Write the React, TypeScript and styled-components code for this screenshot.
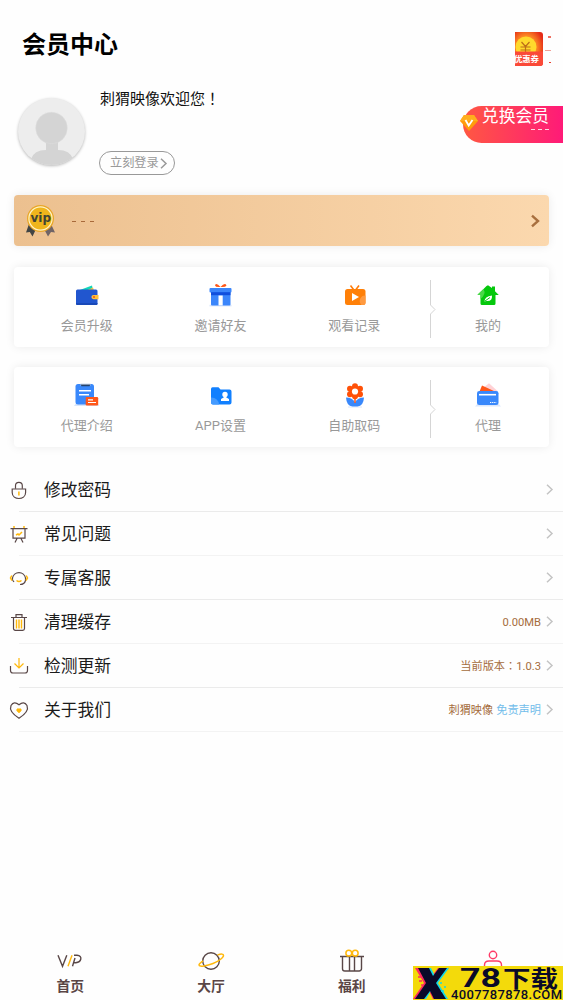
import React from 'react';
import styled, { createGlobalStyle } from 'styled-components';

const Global = createGlobalStyle`
  * { box-sizing: border-box; }
  body { margin: 0; background: #fefefe; overflow: hidden; font-family: Roboto, "Noto Sans CJK SC", sans-serif; }
  svg { display: block; flex: none; overflow: visible; }
`;

const Page = styled.div`
  position: relative;
  display: flex;
  flex-direction: column;
  width: 563px;
  height: 1000px;
  overflow: hidden;
  background: #fefefe;
`;

const Header = styled.header`
  display: flex;
  justify-content: space-between;
  height: 90px;
  padding: 26px 12px 0 22px;
`;

const Title = styled.h1`
  margin: 0;
  font-size: 24px;
  line-height: 38px;
  font-weight: 700;
  color: #000;
`;

const Coupon = styled.div`
  display: flex;
  gap: 2px;
  height: 34px;
  margin-top: 6px;
`;

const CouponBadge = styled.div`
  position: relative;
  width: 28px;
  height: 34px;
  border-radius: 0 3px 3px 0;
  overflow: hidden;
`;

const CouponText = styled.span`
  position: absolute;
  right: 4px;
  bottom: 2px;
  font-size: 8.4px;
  line-height: 10px;
  font-weight: 700;
  color: #fff;
  white-space: nowrap;
`;

const Profile = styled.section`
  display: flex;
  height: 105px;
`;

const Avatar = styled.div`
  width: 67px;
  height: 67px;
  margin: 8px 14px 0 18px;
  border-radius: 50%;
  overflow: hidden;
  background: #ededed;
  box-shadow: 0 1px 3px rgba(0, 0, 0, 0.28);
`;

const Welcome = styled.div`
  flex: 1;
  display: flex;
  flex-direction: column;
  align-items: flex-start;
`;

const WelcomeText = styled.div`
  height: 20px;
  margin-left: 1px;
  font-size: 15px;
  line-height: 16px;
  color: #111;
`;

const Centered = styled.span`
  font-family: "Noto Sans CJK TC", sans-serif;
  line-height: 1;
`;

const LoginButton = styled.button`
  display: flex;
  align-items: center;
  gap: 1px;
  width: 76px;
  height: 24px;
  margin: 41px 0 0;
  padding: 0 0 0 10px;
  border: 1px solid #999;
  border-radius: 12px;
  background: transparent;
  font: 12.2px/22px Roboto, "Noto Sans CJK SC", sans-serif;
  color: #999;
`;

const Ribbon = styled.div`
  position: relative;
  width: 100px;
  height: 37px;
  margin-top: 16px;
  padding: 1px 14px 0 0;
  border-radius: 19px 0 0 19px;
  background: linear-gradient(90deg, #ff5842, #ff1a78);
  color: #fff;
  text-align: right;
`;

const RibbonTitle = styled.div`
  font-size: 16.8px;
  line-height: 18px;
`;

const Dashes = styled.div<{ $color: string; $gap: number; $width: number }>`
  display: flex;
  gap: ${(p) => p.$gap}px;
  i { width: ${(p) => p.$width}px; height: 1px; background: ${(p) => p.$color}; }
`;

const RibbonDashes = styled(Dashes)`
  justify-content: flex-end;
  margin-top: 4px;
`;

const Gem = styled.svg`
  position: absolute;
  left: -3px;
  top: 8px;
`;

const VipBar = styled.section`
  display: flex;
  align-items: center;
  height: 51px;
  margin: 0 14px 21px;
  padding: 0 10px 0 11px;
  border-radius: 4px;
  background: linear-gradient(90deg, #ecc08f, #fbd8ae);
  box-shadow: 0 0 10px rgba(0, 0, 0, 0.08);
`;

const VipDashes = styled(Dashes)`
  flex: 1;
  margin: 1px 0 0 17px;
`;

const Card = styled.section`
  display: grid;
  grid-template-columns: repeat(4, 133.7px);
  height: 80px;
  margin: 0 14px 20px;
  padding-left: 6px;
  border-radius: 4px;
  background: #fff;
  box-shadow: 0 0 10px rgba(0, 0, 0, 0.08);
`;

const Cell = styled.div`
  position: relative;
  display: flex;
  flex-direction: column;
  align-items: center;
  padding-top: 16px;
`;

const CellLabel = styled.span`
  margin-top: 9px;
  font-size: 13px;
  line-height: 20px;
  color: #999;
`;

const Divider = styled.svg`
  position: absolute;
  left: 9px;
  top: 13px;
`;

const List = styled.ul`
  margin: 1px 0 0;
  padding: 0;
  list-style: none;
`;

const Row = styled.li<{ $line: string }>`
  display: flex;
  align-items: center;
  height: 44px;
  padding: 0 10px 0 9px;
  background: linear-gradient(${(p) => p.$line}, ${(p) => p.$line}) 19px 100% / 100% 1px no-repeat;
`;

const RowLabel = styled.span`
  flex: 1;
  margin: -1px 0 0 15px;
  font-size: 16.8px;
  line-height: 24px;
  color: #1b1b1b;
`;

const RowValue = styled.span<{ $blue?: boolean }>`
  margin: 1px 0 0 3px;
  font-size: 11.2px;
  line-height: 16px;
  color: ${(p) => (p.$blue ? '#72bdeb' : '#a56c3c')};
`;

const RowArrow = styled.div`
  margin: -2px 0 0 5px;
`;

const TabBar = styled.nav`
  display: grid;
  grid-template-columns: repeat(4, 1fr);
  height: 60px;
  margin-top: auto;
`;

const Tab = styled.div`
  display: flex;
  flex-direction: column;
  align-items: center;
  padding-top: 8px;
`;

const TabLabel = styled.span`
  margin-top: 4px;
  font-size: 13.8px;
  line-height: 20px;
  font-weight: 700;
  color: #5a4545;
`;

const Watermark = styled.div`
  position: absolute;
  left: 413px;
  top: 966px;
  display: flex;
  width: 150px;
  height: 34px;
  background: #f3da0b;
`;

const WatermarkText = styled.svg`
  text { fill: #0a0a28; }
`;

const Arrow = ({ color = '#c4c4c4', w = 7, h = 11, stroke = 1.5 }: { color?: string; w?: number; h?: number; stroke?: number }) => (
  <svg width={w} height={h} viewBox={`0 0 ${w} ${h}`} fill="none" stroke={color} strokeWidth={stroke}>
    <path d={`M1 .7L${w - 1} ${h / 2}L1 ${h - 0.7}`} />
  </svg>
);

const Medal = () => (
  <svg width="30" height="34" viewBox="0 0 30 34">
    <path d="M4 20L1 28.500L4.800 28L7.500 32.500L11 25z" fill="#414444" />
    <path d="M26 20L30 28.500L26 28L23 32.500L19 25z" fill="#706466" />
    <circle cx="15.500" cy="14.500" r="13.500" fill="#e9a629" />
    <circle cx="15.500" cy="14.500" r="11.600" fill="#efb51c" stroke="#fff3c4" strokeWidth="1.200" />
    <text x="15.800" y="18" textAnchor="middle" fontFamily="DejaVu Sans, sans-serif" fontSize="12" fontWeight="700" fill="#414434">vip</text>
  </svg>
);

const cardIcons: Record<string, React.ReactNode> = {
  wallet: (
    <>
      <path d="M4.500 7.500L18 2.500L19 7.500z" fill="#12d6ba" />
      <path d="M12.500 7.500L19 4.500L20 7.500z" fill="#ffc23b" />
      <rect x="2" y="6.500" width="21.500" height="15.500" rx="1.500" fill="#2156cf" />
      <path d="M2 20h21.500v.7a1.300 1.300 0 0 1-1.300 1.300H3.300A1.300 1.300 0 0 1 2 20.700z" fill="#1949b8" />
      <path d="M19.500 12h5v4.200h-5a2.100 2.100 0 0 1 0-4.200z" fill="#ffc23b" />
      <circle cx="20" cy="14" r="1.100" fill="#ef5a24" />
    </>
  ),
  gift: (
    <>
      <path d="M12.500 4Q8-1 7 2.500Q7.500 4.500 12.500 4Q17.500 4.500 18.500 2.500Q17-1 12.500 4z" fill="#ff5718" />
      <path d="M1.500 22.600h22" stroke="#d8e5fb" strokeWidth="1.600" />
      <rect x="3" y="8" width="19.500" height="14.500" rx="1" fill="#3b86fb" />
      <rect x="1.500" y="5" width="22" height="4.500" rx="1" fill="#3b86fb" />
      <rect x="3" y="9.200" width="19.500" height="3" fill="#104fdd" />
      <rect x="10.500" y="12.500" width="4.200" height="10" fill="#fff" />
    </>
  ),
  tv: (
    <>
      <path d="M8.500 2.500L11.500 6.500M17 2.500L14 6.500" stroke="#ff7d0c" strokeWidth="1.600" />
      <rect x="3" y="6" width="20.500" height="16" rx="2.500" fill="#ff8008" />
      <path d="M23.500 12.500a5.500 5.500 0 0 0-4 9.500h2a2 2 0 0 0 2-2z" fill="#ff9a40" />
      <path d="M10 10L17 14L10 18z" fill="#fff" />
    </>
  ),
  home: (
    <>
      <path d="M13 2.300L17 5V3.500h3v4.700L23.800 12H20.500v8.500a1.500 1.500 0 0 1-1.500 1.500H7A1.500 1.500 0 0 1 5.500 20.500V12H2.500L11.500 3z" fill="#05c80d" />
      <path d="M8.500 6L2.500 11.500L3 12H5.500v4Q11.500 11 8.500 6z" fill="#49d849" />
      <path d="M9.500 18.500Q9.500 13.500 17 12.500Q17.500 18.500 11.500 18z" fill="#fff" />
      <path d="M10 18L15 14.500" stroke="#05c80d" />
    </>
  ),
  notes: (
    <>
      <path d="M0 23L2.500 19.500h20l3 3.500z" fill="#d7e5fb" />
      <rect x="1.500" y="1" width="18.500" height="20.500" rx="2.500" fill="#3988fb" />
      <path d="M6.500 0h10v2.500H6.500z" fill="#e5edf9" />
      <path d="M6.500 1.500l1 1.700h8l1-1.700" fill="#24426c" />
      <path d="M5 7.700h12M5 11.700h10" stroke="#fff" strokeWidth="1.600" />
      <rect x="11.700" y="14" width="12.500" height="8.500" rx="1.200" fill="#ff5718" />
      <path d="M14 16.800h5M14 19.500h8" stroke="#fff" strokeWidth="1.200" />
    </>
  ),
  folder: (
    <>
      <path d="M3 6Q3 4.300 4.500 4.300h6L12.500 6.500H21.500a2 2 0 0 1 2 2V19.500a2 2 0 0 1-2 2H5a2 2 0 0 1-2-2z" fill="#1180ff" />
      <path d="M3 14.500a7.500 7.500 0 0 1 8 7H5a2 2 0 0 1-2-2z" fill="#459bff" />
      <circle cx="17" cy="11.500" r="2.700" fill="#fff" />
      <path d="M15.700 12h2.600v2.500l2.700 1.600v2h-8v-2l2.700-1.600z" fill="#fff" />
    </>
  ),
  flower: (
    <>
      <path d="M6 24h14" stroke="#d8e5fb" />
      <path d="M4 14.500Q10.500 14.500 13 19.500Q15.500 14.500 22 14.500Q21.500 23 15.500 23.500H10.500Q4.500 23 4 14.500z" fill="#3988fb" />
      <path d="M13 15v5" stroke="#ff5718" strokeWidth="1.500" />
      <g fill="#ff5108">
        <circle cx="13" cy="3.300" r="3" /><circle cx="8" cy="5.800" r="3" /><circle cx="18" cy="5.800" r="3" />
        <circle cx="8" cy="11.200" r="3" /><circle cx="18" cy="11.200" r="3" /><circle cx="13" cy="13.200" r="3" />
        <circle cx="13" cy="8.500" r="5.500" />
      </g>
      <circle cx="13" cy="8.500" r="3.100" fill="#fff" />
    </>
  ),
  cards: (
    <>
      <path d="M0 23.500L3 20h20l3 3.500z" fill="#dbe7fc" />
      <path d="M8 5L14 .3L22.500 8H10z" fill="#ffd2d6" />
      <path d="M4.500 8.500L7 2.500L20 8.500z" fill="#ff5718" />
      <rect x="2" y="8" width="21.500" height="14" rx="2.300" fill="#3988fb" />
      <path d="M4 11.700h17" stroke="#fff" strokeWidth="1.600" />
      <path d="M15 19.500h6.500" stroke="#fff" strokeDasharray="1.300 .8" />
    </>
  ),
};

const rowIcons: Record<string, React.ReactNode> = {
  lock: (
    <>
      <path d="M6.500 8.700V5.700a3.400 3.400 0 0 1 6.800 0V8.700" />
      <path d="M3.200 9h13.400V12.500c0 8-13.400 8-13.400 0z" />
      <path d="M9.900 11.500v4" stroke="#ffb80b" strokeWidth="1.500" />
    </>
  ),
  board: (
    <>
      <path d="M1.500 4.700h17M4 5v9.200h12V5M8 14.500L6 18.500M12 14.500L14 18.500" />
      <path d="M5 2v2M15 2v2M7 11l2-1 1 1 3-3" stroke="#ffb80b" strokeWidth="1.500" />
    </>
  ),
  service: (
    <>
      <path d="M3.500 12V10a6.600 6.600 0 0 1 13 0v2.500q-1 4-5.500 4M3.500 12l1.500 2" />
      <path d="M2.800 7.500L1.500 10L3 12.500M17.200 7.500l1.300 2.500L17 12.500M7.500 12.500q2.500 2 5 0" stroke="#ffb80b" strokeWidth="1.500" />
    </>
  ),
  trash: (
    <>
      <path d="M2 5.500h16M7 5V2.700h6V5M4.500 6v10.500a1.800 1.800 0 0 0 1.800 1.800h7.400a1.800 1.800 0 0 0 1.800-1.800V6" />
      <path d="M7.500 7.500v9M10 7.500v9M12.500 7.500v9" stroke="#ffb80b" strokeWidth="1.400" />
    </>
  ),
  download: (
    <>
      <path d="M1.500 10v4.500a2.500 2.500 0 0 0 2.500 2.500h12a2.500 2.500 0 0 0 2.500-2.500V10" />
      <path d="M10 2v10M5.500 7.500L10 12L14.500 7.500" stroke="#ffb80b" />
    </>
  ),
  heart: (
    <>
      <path d="M10 18.200Q-.5 11.500 2 5.500Q5 .5 10 4.800Q15 .5 18 5.500Q20.500 11.500 10 18.200z" />
      <path d="M10 13Q6.500 10.500 8 9Q9 8 10 9Q11 8 12 9Q13.500 10.500 10 13z" fill="#ffb80b" stroke="#ffb80b" strokeWidth=".5" />
    </>
  ),
};

const tabIcons: Record<string, React.ReactNode> = {
  vip: (
    <>
      <path d="M2 7.300L6.500 18.300L10.800 7.300M16.500 18.300L19 10M18 7.300h3q4.500.5 3.800 3.700t-5 3.700h-2" />
      <path d="M16 7.300L12 18.300" stroke="#ffb80b" />
    </>
  ),
  planet: (
    <>
      <circle cx="14" cy="13" r="8.300" />
      <path d="M20.500 7q6-2 6 .5c0 2-5 6-10.500 8S2.300 19.500 2 17q0-1.500 4-4.200" stroke="#ffb80b" strokeWidth="1.500" />
    </>
  ),
  gift: (
    <>
      <path d="M2 8.500h24M4.500 9v11.700a2.300 2.300 0 0 0 2.300 2.300h14.400a2.300 2.300 0 0 0 2.300-2.300V9M11.500 9v14M16.500 9v14" />
      <circle cx="10.800" cy="5.200" r="2.900" stroke="#ffb80b" strokeWidth="1.500" />
      <circle cx="17.200" cy="5.200" r="2.900" stroke="#ffb80b" strokeWidth="1.500" />
    </>
  ),
  user: (
    <g stroke="#ff3b68">
      <circle cx="14" cy="7" r="3.700" />
      <path d="M5.500 19v-2q0-4 4.500-4h8q4.500 0 4.500 4v2" />
    </g>
  ),
};

const menus = [
  [['wallet', '会员升级'], ['gift', '邀请好友'], ['tv', '观看记录'], ['home', '我的']],
  [['notes', '代理介绍'], ['folder', 'APP设置'], ['flower', '自助取码'], ['cards', '代理']],
];

const rows: { icon: string; label: string; value?: React.ReactNode; link?: string }[] = [
  { icon: 'lock', label: '修改密码' },
  { icon: 'board', label: '常见问题' },
  { icon: 'service', label: '专属客服' },
  { icon: 'trash', label: '清理缓存', value: '0.00MB' },
  { icon: 'download', label: '检测更新', value: <>当前版本<Centered>：</Centered>1.0.3</> },
  { icon: 'heart', label: '关于我们', value: '刺猬映像', link: '免责声明' },
];

const tabs = [['vip', '首页'], ['planet', '大厅'], ['gift', '福利'], ['user', '']];

export default function App() {
  return (
    <Page>
      <Global />
      <Header>
        <Title>会员中心</Title>
        <Coupon>
          <CouponBadge>
            <svg width="28" height="34" viewBox="0 0 28 34">
              <defs>
                <radialGradient id="glow" cx=".4" cy=".48" r=".65">
                  <stop offset=".5" stopColor="#ff9625" />
                  <stop offset="1" stopColor="#e52b17" />
                </radialGradient>
              </defs>
              <rect width="28" height="34" fill="url(#glow)" />
              <circle cx="11" cy="15" r="10.500" fill="#ffd92c" />
              <path d="M6.500 10L10.500 14.500L14.500 10M5.500 15h10M5.500 18h10M10.500 14.500V20" fill="none" stroke="#bd6e18" strokeWidth="1.200" />
              <path d="M0 19.500h28V34H0z" fill="#fa4938" />
            </svg>
            <CouponText>优惠券</CouponText>
          </CouponBadge>
          <svg width="6" height="34" viewBox="0 0 6 34">
            <path d="M3 5h3" stroke="#e8402e" strokeWidth="1.500" />
            <path d="M0 18.500h6" stroke="#f1a097" />
            <path d="M4 30.500h2" stroke="#e8402e" />
          </svg>
        </Coupon>
      </Header>

      <Profile>
        <Avatar>
          <svg width="67" height="67" viewBox="0 0 67 67">
            <path d="M28 43h12v9q12 0 15 9v6H13v-6q3-9 15-9z" fill="#d4d4d4" />
            <circle cx="33.500" cy="30" r="15.800" fill="#d4d4d4" stroke="#dedede" strokeWidth=".5" />
          </svg>
        </Avatar>
        <Welcome>
          <WelcomeText>刺猬映像欢迎您<Centered>！</Centered></WelcomeText>
          <LoginButton>立刻登录<Arrow color="#999" /></LoginButton>
        </Welcome>
        <Ribbon>
          <Gem width="18" height="18" viewBox="0 0 18 18">
            <path d="M4 1h10l4 6-9 10L0 7z" fill="#ff9d0b" />
            <path d="M4 1h10l4 6H0z" fill="#ffae1e" />
            <path d="M5.500 6L8.700 11.500L12.500 6" fill="none" stroke="#fff" strokeWidth="1.800" />
          </Gem>
          <RibbonTitle>兑换会员</RibbonTitle>
          <RibbonDashes $color="#ffd5e0" $gap={3} $width={4}><i /><i /><i /></RibbonDashes>
        </Ribbon>
      </Profile>

      <VipBar>
        <Medal />
        <VipDashes $color="#a86a3a" $gap={5} $width={4}><i /><i /><i /></VipDashes>
        <Arrow color="#a86f3e" w={8} h={12} stroke={2.4} />
      </VipBar>

      {menus.map((menu, m) => (
        <Card key={m}>
          {menu.map(([icon, label], i) => (
            <Cell key={label}>
              {i === 3 && (
                <Divider width="6" height="58" viewBox="0 0 6 58" fill="none" stroke="#d5d5d5">
                  <path d="M.5 0v25l4.500 4.500L.5 34v24" />
                </Divider>
              )}
              <svg width="25" height="24" viewBox="0 0 25 24" fill="none">{cardIcons[icon]}</svg>
              <CellLabel>{label}</CellLabel>
            </Cell>
          ))}
        </Card>
      ))}

      <List>
        {rows.map((row, i) => (
          <Row key={row.label} $line={i % 2 ? '#f3f3f3' : '#ebebeb'}>
            <svg width="20" height="20" viewBox="0 0 20 20" fill="none" stroke="#594747" strokeWidth="1.200">{rowIcons[row.icon]}</svg>
            <RowLabel>{row.label}</RowLabel>
            {row.value && <RowValue>{row.value}</RowValue>}
            {row.link && <RowValue $blue>{row.link}</RowValue>}
            <RowArrow><Arrow /></RowArrow>
          </Row>
        ))}
      </List>

      <TabBar>
        {tabs.map(([icon, label]) => (
          <Tab key={icon}>
            <svg width="28" height="24" viewBox="0 0 28 24" fill="none" stroke="#594747" strokeWidth="1.400">{tabIcons[icon]}</svg>
            {label && <TabLabel>{label}</TabLabel>}
          </Tab>
        ))}
      </TabBar>

      <Watermark>
        <svg width="37" height="34" viewBox="0 0 37 34">
          <path d="M2 2h12l5 8 6-8h11L23 17l11 16H20l-4-8-6 8H0l11-16z" fill="#ff2a5f" />
          <path d="M8 2h10l4 8 5-8h9L25 17l10 16H23l-5-8-5 8H4l11-16z" fill="#12d9e8" />
          <path d="M5 2h11l4 8 6-8h8L23 17l10 16H21l-4-8-6 8H2l11-16z" fill="#0a0a28" />
          <path d="M5 11h4M6 15h3M8 19h3" stroke="#ff2a5f" strokeWidth="1.500" />
          <path d="M27 17h2M31 21h2M28 25h3" stroke="#12d9e8" strokeWidth="1.500" />
        </svg>
        <WatermarkText width="113" height="34" viewBox="0 0 113 34">
          <text x="10" y="21" textLength="41" lengthAdjust="spacingAndGlyphs" fontFamily="Roboto, sans-serif" fontSize="26" fontWeight="700">78</text>
          <text x="53" y="21" textLength="55" lengthAdjust="spacingAndGlyphs" fontFamily="Noto Sans CJK SC, sans-serif" fontSize="23" fontWeight="700">下载</text>
          <text x="1" y="33" textLength="111" lengthAdjust="spacing" fontFamily="Roboto, sans-serif" fontSize="13" fontWeight="500">4007787878.COM</text>
        </WatermarkText>
      </Watermark>
    </Page>
  );
}
